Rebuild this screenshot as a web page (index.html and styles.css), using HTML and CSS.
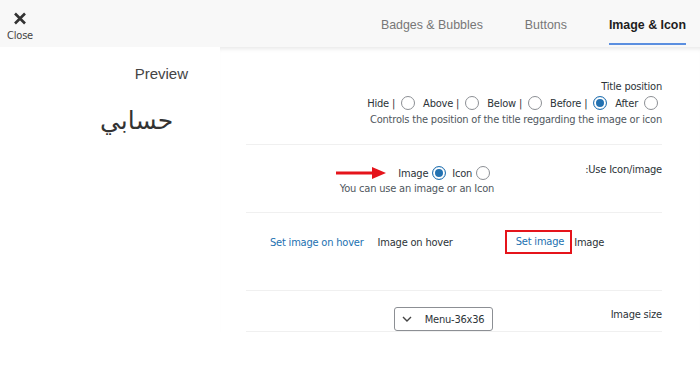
FILE: index.html
```html
<html lang="en">
  <head>
    <meta charset="UTF-8" />
    <meta name="viewport" content="width=device-width, initial-scale=1.0" />
    <title>Menu item settings</title>
    <link rel="stylesheet" href="styles.css">
  </head>
  <body>
    <div class="header">
      <div class="close-btn">
        <svg width="14" height="13" viewBox="0 0 14 13">
          <path d="M2 1.5 L12 11.5 M12 1.5 L2 11.5" stroke="#333" stroke-width="2.6" stroke-linecap="butt" />
        </svg>
        <span>Close</span>
      </div>
      <div class="tabs">
        <div class="tab">Badges &amp; Bubbles</div>
        <div class="tab">Buttons</div>
        <div class="tab active">Image &amp; Icon</div>
      </div>
    </div>

    <div class="main">
      <div class="preview">
        <div class="preview-title">Preview</div>
        <div class="preview-item">حسابي</div>
      </div>

      <div class="settings">
        <!-- title position -->
        <div class="row row-title">
          <div class="label">Title position</div>
          <div class="radios">
            <label>Hide |</label><input type="radio" name="pos" />
            <label>Above |</label><input type="radio" name="pos" />
            <label>Below |</label><input type="radio" name="pos" />
            <label>Before |</label><input type="radio" name="pos" checked />
            <label>After</label><input type="radio" name="pos" />
          </div>
          <div class="desc">Controls the position of the title reggarding the image or icon</div>
        </div>

        <!-- icon / image -->
        <div class="row row-use">
          <div class="use-controls">
            <div class="radios">
              <svg class="arrow" width="50" height="14" viewBox="0 0 50 14">
                <path d="M0 7 H38" stroke="#e5141b" stroke-width="3" />
                <path d="M36 1 L50 7 L36 13 Z" fill="#e5141b" />
              </svg>
              <label>Image</label><input type="radio" name="use" checked />
              <label>Icon</label><input type="radio" name="use" />
            </div>
            <div class="desc">You can use an image or an Icon</div>
          </div>
          <div class="label">:Use Icon/image</div>
        </div>

        <!-- images -->
        <div class="row row-images">
          <a class="link" href="#">Set image on hover</a>
          <span class="img-label">Image on hover</span>
          <a class="link boxed" href="#">Set image</a>
          <span>Image</span>
        </div>

        <!-- size -->
        <div class="row row-size">
          <div class="select">
            <svg width="10" height="6" viewBox="0 0 10 6">
              <path d="M1 1 L5 5 L9 1" fill="none" stroke="#444" stroke-width="1.4" />
            </svg>
            <span>Menu-36x36</span>
          </div>
          <div class="label">Image size</div>
        </div>
      </div>
    </div>
  </body>
</html>
```

FILE: styles.css
```css
body {
  margin: 0;
  background-color: #fff;
  font-family: "DejaVu Sans Condensed", "DejaVu Sans", sans-serif;
  font-size: 11px;
  letter-spacing: -0.2px;
  color: #2c3338;
}
.header {
  display: flex;
  align-items: stretch;
  height: 47px;
  background-color: #f8f8f8;
}
.close-btn {
  display: flex;
  flex-direction: column;
  align-items: center;
  width: 26px;
  padding: 12px 0 0 7px;
  font-size: 11px;
  color: #444;
}
.close-btn span {
  margin-top: 4px;
  line-height: 13px;
}
.tabs {
  display: flex;
  margin-left: auto;
  padding-right: 14px;
  gap: 42px;
  font-family: "Liberation Sans", Arial, sans-serif;
  font-size: 12.4px;
  letter-spacing: 0;
}
.tab {
  display: flex;
  align-items: center;
  color: #777;
  border-bottom: 2px solid transparent;
  margin-bottom: 2px;
  padding-top: 7px;
}
.tab.active {
  color: #1d1d1d;
  font-weight: bold;
  border-bottom-color: #5b8fe0;
}
.main {
  display: flex;
}
.preview {
  width: 220px;
  flex-shrink: 0;
}
.preview-title {
  text-align: right;
  padding: 18px 32px 0 0;
  font-family: "Liberation Sans", Arial, sans-serif;
  font-size: 15px;
  letter-spacing: 0;
  line-height: 17px;
  color: #444;
}
.preview-item {
  padding: 24px 0 0 100px;
  font-family: "DejaVu Sans", sans-serif;
  font-size: 25px;
  letter-spacing: 0;
  color: #333;
}
.settings {
  flex: 1;
  padding: 0 38px 0 26px;
  box-shadow: inset 0 5px 4px -3px rgba(0, 0, 0, 0.09);
}
.row {
  display: flex;
  border-bottom: 1px solid #f0f0f0;
}
.label {
  line-height: 16px;
}
.desc {
  line-height: 16px;
  color: #50575e;
}
.radios {
  display: flex;
  align-items: center;
  height: 16px;
}
.radios label {
  margin: 0 6px 0 8px;
}
.radios label:first-child,
.radios .arrow + label {
  margin-left: 0;
}
input[type="radio"] {
  appearance: none;
  -webkit-appearance: none;
  width: 14px;
  height: 14px;
  margin: 0;
  border: 1px solid #8c8f94;
  border-radius: 50%;
  background-color: #fff;
  box-sizing: border-box;
}
input[type="radio"]:checked {
  border-color: #2271b1;
  box-shadow: inset 0 0 0 2px #fff, inset 0 0 0 6px #2271b1;
}
.row-title {
  flex-direction: column;
  align-items: flex-end;
  padding: 32px 0 16px;
}
.row-title .radios {
  margin-right: 4px;
}
.row-title .desc {
  margin-top: 1px;
}
.row-use {
  justify-content: flex-end;
  padding: 17px 0 15px;
}
.use-controls {
  display: flex;
  flex-direction: column;
  align-items: flex-end;
  margin: 3px 91px 0 0;
}
.use-controls .radios {
  margin-right: 4px;
}
.use-controls .radios label {
  margin: 0 4px 0 6px;
}
.arrow {
  margin-right: 6px;
}
.row-images {
  align-items: center;
  padding: 17px 0 36px 24px;
}
.link {
  color: #2271b1;
  text-decoration: none;
}
.img-label {
  margin: 0 52px 0 14px;
}
.boxed {
  display: block;
  padding: 3px 6px 3px 9px;
  margin-right: 2px;
  border: 2px solid #e5141b;
  line-height: 14px;
}
.row-size {
  justify-content: flex-end;
  align-items: flex-start;
  padding: 16px 0 0;
}
.select {
  display: flex;
  align-items: center;
  gap: 13px;
  width: 99px;
  height: 24px;
  margin-right: 118px;
  padding-left: 7px;
  border: 1px solid #8c8f94;
  border-radius: 3px;
  box-sizing: border-box;
  white-space: nowrap;
}
```
